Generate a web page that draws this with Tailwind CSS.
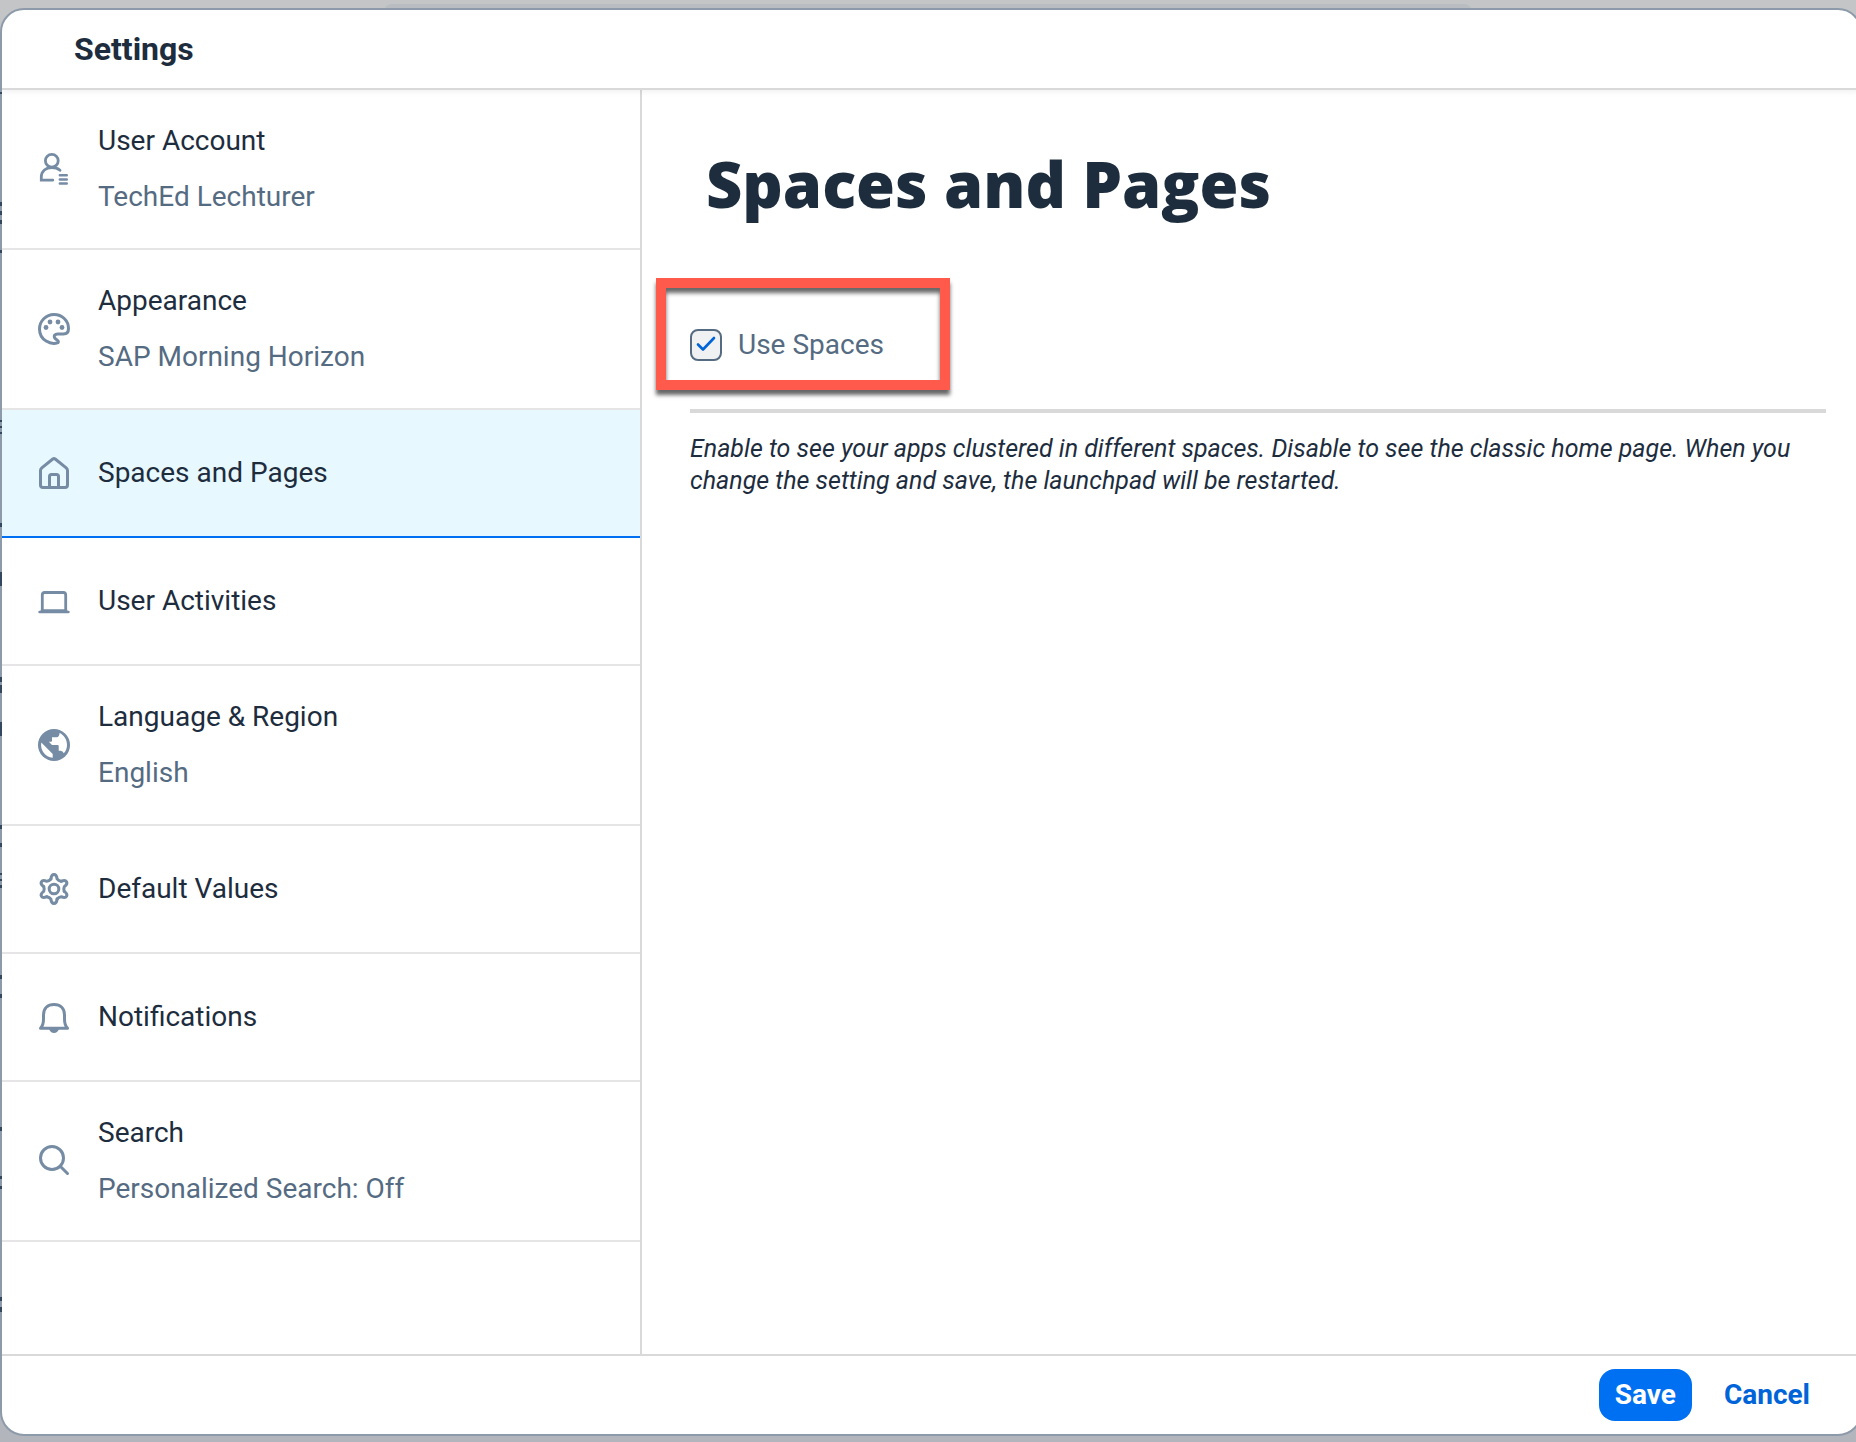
<!DOCTYPE html>
<html lang="en">
<head>
<meta charset="utf-8">
<meta name="viewport" content="width=device-width, initial-scale=1">
<title>Settings</title>
<script src="https://cdn.jsdelivr.net/npm/@tailwindcss/browser@4"></script>
</head>
<body class="relative flex h-screen flex-col overflow-hidden bg-linear-to-b from-[#c4c5c6] to-[#b2b6bc] pt-2 pb-1.5 font-[Roboto,sans-serif] text-[28px] text-[#1d2d3e]">
  <div class="absolute inset-x-96 top-1 h-4 rounded-t-lg bg-[#b9bcc0]"></div>
  <div role="dialog" aria-labelledby="title" class="relative -mr-1.5 flex min-h-0 flex-1 flex-col overflow-hidden rounded-3xl border-2 border-[#8d9aaa] bg-white">
    <header class="relative z-10 flex h-20 shrink-0 items-center border-b-2 border-[#d9d9d9] px-18 shadow-[0_2px_6px_rgba(0,0,0,0.06)]">
      <h1 id="title" class="text-[32px] leading-10 font-bold">Settings</h1>
    </header>

    <div class="flex min-h-0 flex-1">
      <nav aria-label="Settings sections" class="w-160 shrink-0 border-r-2 border-[#d9d9d9] leading-14">
        <a href="#account" class="flex h-40 items-center gap-7 border-b-2 border-[#e5e5e5] pl-9">
          <svg class="size-8 shrink-0 text-[#758ca4]" viewBox="0 0 32 32" fill="none" stroke="currentColor" stroke-width="2.8" stroke-linecap="round" aria-hidden="true"><circle cx="13.8" cy="7.8" r="6.4"/><path d="M14.8 27.2H3.3V24C3.3 18 8 14.5 13.8 14.5C17 14.5 20 15.5 22 17.3"/><path stroke-width="2.4" d="M21.8 22.3h7M21.8 26.5h7M21.8 30.5h7"/></svg>
          <span class="flex flex-col"><span>User Account</span><span class="text-[#556b82]">TechEd Lechturer</span></span>
        </a>
        <a href="#appearance" class="flex h-40 items-center gap-7 border-b-2 border-[#e5e5e5] pl-9">
          <svg class="size-8 shrink-0 text-[#758ca4]" viewBox="0 0 32 32" fill="none" stroke="currentColor" stroke-width="3" stroke-linejoin="round" aria-hidden="true"><path d="M20 29.6C13 32.2 1.5 27.5 1.5 16C1.5 8 8 1.5 16 1.5S30.5 7.5 30.5 15.5C30.5 19 28.5 21 25.5 21H19.5C17 21 15.8 22.5 16.5 24.5C17 26 18.2 26.3 19.3 27.2C20.4 28 20.6 29 20 29.6Z"/><g fill="currentColor" stroke="none"><circle cx="12" cy="9" r="2.4"/><circle cx="20" cy="9" r="2.4"/><circle cx="8" cy="14.5" r="2.4"/><circle cx="24" cy="14.5" r="2.4"/></g></svg>
          <span class="flex flex-col"><span>Appearance</span><span class="text-[#556b82]">SAP Morning Horizon</span></span>
        </a>
        <a href="#spaces" aria-current="page" class="flex h-32 items-center gap-7 border-b-2 border-[#0070f2] bg-[#e8f8ff] pl-9">
          <svg class="size-8 shrink-0 text-[#758ca4]" viewBox="0 0 32 32" fill="none" stroke="currentColor" stroke-width="3" stroke-linejoin="round" aria-hidden="true"><path d="M14.8 2Q16 1.2 17.2 2L28.2 10.8Q29.5 12 29.5 13.5V28Q29.5 30.5 27 30.5H5Q2.5 30.5 2.5 28V13.5Q2.5 12 3.8 10.8Z"/><path d="M11.5 30V19.5Q11.5 17.5 13.5 17.5H18.5Q20.5 17.5 20.5 19.5V30"/></svg>
          <span>Spaces and Pages</span>
        </a>
        <a href="#activities" class="flex h-32 items-center gap-7 border-b-2 border-[#e5e5e5] pl-9">
          <svg class="size-8 shrink-0 text-[#758ca4]" viewBox="0 0 32 32" fill="none" stroke="currentColor" stroke-width="2.8" stroke-linecap="round" aria-hidden="true"><path d="M4.3 26V10Q4.3 7.5 6.8 7.5H25.2Q27.7 7.5 27.7 10V26"/><path d="M1.5 27H30.5" stroke-width="2.4"/><path d="M4 25.7H28"/></svg>
          <span>User Activities</span>
        </a>
        <a href="#language" class="flex h-40 items-center gap-7 border-b-2 border-[#e5e5e5] pl-9">
          <svg class="size-8 shrink-0 text-[#758ca4]" viewBox="0 0 32 32" fill="currentColor" aria-hidden="true"><circle cx="16" cy="16" r="16"/><path fill="#fff" d="M21.5 4C26 6 29 10.5 29 16C29 19 28 22 25.8 24.3Q25 21.7 22.5 21.7H20.7V17Q20.7 16 19.7 16H14L10.8 12.8H13Q14 12.8 14 11.8V8.3H18.5Q21.5 8 21.5 4ZM3.3 13.5L14.7 25V28.8C7.5 28.2 1.8 21 3.3 13.5Z"/></svg>
          <span class="flex flex-col"><span>Language &amp; Region</span><span class="text-[#556b82]">English</span></span>
        </a>
        <a href="#defaults" class="flex h-32 items-center gap-7 border-b-2 border-[#e5e5e5] pl-9">
          <svg class="size-8 shrink-0 text-[#758ca4]" viewBox="0 0 32 32" fill="none" stroke="currentColor" stroke-width="3" stroke-linejoin="round" stroke-linecap="round" aria-hidden="true"><circle cx="16" cy="16" r="4.8"/><path id="tooth" d="M12.9 5.9C13.2 2.8 14 1.5 16 1.5S18.8 2.8 19.1 5.9Q20.5 7.8 23.2 8.3"/><use href="#tooth" transform="rotate(60 16 16)"/><use href="#tooth" transform="rotate(120 16 16)"/><use href="#tooth" transform="rotate(180 16 16)"/><use href="#tooth" transform="rotate(240 16 16)"/><use href="#tooth" transform="rotate(300 16 16)"/></svg>
          <span>Default Values</span>
        </a>
        <a href="#notifications" class="flex h-32 items-center gap-7 border-b-2 border-[#e5e5e5] pl-9">
          <svg class="size-8 shrink-0 text-[#758ca4]" viewBox="0 0 32 32" fill="none" stroke="currentColor" stroke-width="3" stroke-linejoin="round" aria-hidden="true"><path d="M2.5 27.3Q5.5 24 5.5 18V14C5.5 7.5 9.5 3.5 16 3.5S26.5 7.5 26.5 14V18Q26.5 24 29.5 27.3Z"/><path fill="currentColor" stroke="none" d="M11 28H21Q19.5 32 16 32T11 28Z"/></svg>
          <span>Notifications</span>
        </a>
        <a href="#search" class="flex h-40 items-center gap-7 border-b-2 border-[#e5e5e5] pl-9">
          <svg class="size-8 shrink-0 text-[#758ca4]" viewBox="0 0 32 32" fill="none" stroke="currentColor" stroke-width="3" stroke-linecap="round" aria-hidden="true"><circle cx="14" cy="13" r="11.5"/><path d="M22.5 21.5L29.5 28.5"/></svg>
          <span class="flex flex-col"><span>Search</span><span class="text-[#556b82]">Personalized Search: Off</span></span>
        </a>
      </nav>

      <main class="min-w-0 flex-1 pt-[58px] pr-[34px] pl-12">
        <h2 class="pl-4 font-['Open_Sans',sans-serif] text-[63px] leading-18 font-extrabold">Spaces and Pages</h2>
        <div class="-ml-[34px] mt-[58px] flex h-28 w-[294px] items-center border-10 border-[#ff5a4c] pt-[22px] pl-6 shadow-[0_5px_4px_rgba(0,0,0,0.6),inset_0_5px_4px_rgba(0,0,0,0.6)]">
          <label class="flex items-center gap-4 leading-8 text-[#556b82]">
            <span class="grid">
              <input type="checkbox" checked class="col-start-1 row-start-1 size-8 appearance-none rounded-lg border-2 border-[#556b82] bg-[#eff1f2]">
              <svg class="pointer-events-none col-start-1 row-start-1 size-8" viewBox="0 0 32 32" fill="none" stroke="#0064d9" stroke-width="2.6" stroke-linecap="round" stroke-linejoin="round" aria-hidden="true"><path d="M8 15.5L13 20.5L24 9"/></svg>
            </span>
            Use Spaces
          </label>
        </div>
        <hr class="mt-[19px] border-t-4 border-[#d9d9d9]">
        <p class="mt-5 text-[25px] leading-8 italic">Enable to see your apps clustered in different spaces. Disable to see the classic home page. When you change the setting and save, the launchpad will be restarted.</p>
      </main>
    </div>

    <footer class="flex h-20 shrink-0 items-center justify-end gap-4 border-t-2 border-[#d9d9d9] pr-[34px]">
      <button type="button" class="h-13 rounded-2xl bg-[#0070f2] px-4 font-bold text-white">Save</button>
      <button type="button" class="h-13 rounded-2xl px-4 font-bold text-[#0064d9]">Cancel</button>
    </footer>
  </div>
  <!-- Edge of the page behind the dialog -->
  <svg class="absolute top-0 left-0 h-[1442px] w-0.5" viewBox="0 0 2 1442" stroke="#33475f" stroke-width="2" aria-hidden="true"><path d="M1 92v2M1 202v4M1 211v4M1 220v4M1 250v3M1 420v2M1 426v2M1 432v2M1 523v4M1 572v14M1 677v5M1 685v8M1 722v14M1 825v4M1 843v4M1 873v2M1 879v2M1 885v3M1 975v4M1 994v4M1 1127v4M1 1176v3M1 1186v3M1 1297v4M1 1307v5"/></svg>
</body>
</html>
